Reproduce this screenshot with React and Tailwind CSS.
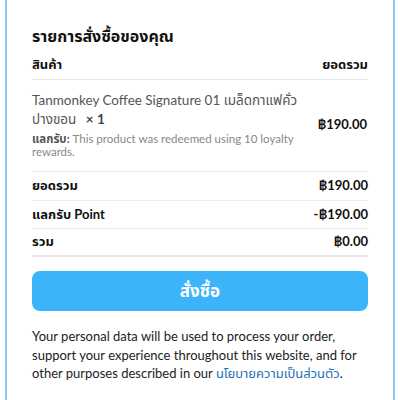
export default function App() {
  const font = { fontFamily: 'Lato, "Noto Sans Thai", "Noto Sans", sans-serif' };
  return (
    <div className="w-[400px] h-[400px] bg-white overflow-hidden" style={font}>
      <div className="ml-[5px] w-[390px] h-[400px] border-x-2 border-[#8cc9e8] px-[25px] pt-[24px]">
        <h2 className="text-[16px] font-bold text-[#111] leading-[24px]">รายการสั่งซื้อของคุณ</h2>
        <div className="mt-[6px] flex justify-between text-[13px] font-bold text-[#111] leading-[20px] pb-[5px] border-b border-[#e5e5e5]">
          <span>สินค้า</span>
          <span>ยอดรวม</span>
        </div>
        <div className="flex items-center justify-between pt-[11px] pb-[13px] border-b border-[#eeeeee]">
          <div className="w-[275px]">
            <div className="text-[13.5px] text-[#555] leading-[19px] whitespace-nowrap">
              Tanmonkey Coffee Signature 01 เมล็ดกาแฟคั่ว<br />ปางขอน <span className="font-bold text-[#444] ml-[6px]">× 1</span>
            </div>
            <div className="mt-[3px] text-[11.5px] text-[#888] leading-[13px] whitespace-nowrap">
              <span className="font-bold text-[#555]">แลกรับ:</span> This product was redeemed using 10 loyalty<br />rewards.
            </div>
          </div>
          <span className="text-[13px] font-bold text-[#111] mr-[1px]">฿190.00</span>
        </div>
        <div className="flex justify-between items-center h-[29px] border-b border-[#eeeeee] text-[13px] font-bold text-[#111]">
          <span>ยอดรวม</span><span>฿190.00</span>
        </div>
        <div className="flex justify-between items-center h-[28px] border-b border-[#eeeeee] text-[13px] font-bold text-[#111]">
          <span>แลกรับ Point</span><span>-฿190.00</span>
        </div>
        <div className="flex justify-between items-center h-[28px] border-b-2 border-[#e8e8e8] text-[13px] font-bold text-[#111]">
          <span>รวม</span><span>฿0.00</span>
        </div>
        <button className="mt-[14px] w-full h-[40px] rounded-[8px] bg-[#3db4fa] text-white text-[17px] font-bold">สั่งซื้อ</button>
        <p className="mt-[16px] text-[13px] leading-[18.5px] text-[#222]">
          Your personal data will be used to process your order, support your experience throughout this website, and for other purposes described in our <span className="text-[#1f6fb5]">นโยบายความเป็นส่วนตัว</span>.
        </p>
      </div>
    </div>
  );
}
